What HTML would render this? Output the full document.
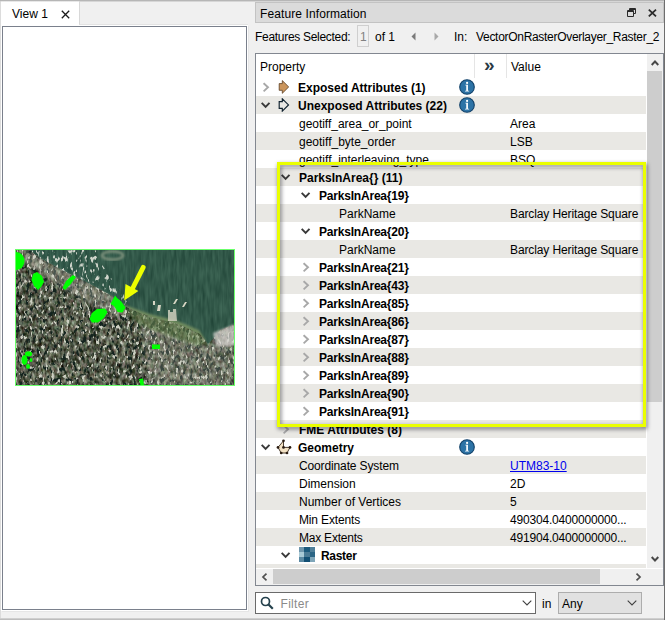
<!DOCTYPE html>
<html><head><meta charset="utf-8"><title>Feature Information</title>
<style>
html,body{margin:0;padding:0}
body{width:665px;height:620px;overflow:hidden;background:#f0f0f0;position:relative;font-family:"Liberation Sans",sans-serif;font-size:12px;color:#000}
div,span,svg{position:absolute;box-sizing:border-box}
.t{white-space:nowrap;line-height:18px;height:18px}
.b{font-weight:bold}
.lk{color:#0000ee;text-decoration:underline}
#tree{left:256px;top:54px;width:407px;height:531px;background:#fff;overflow:hidden}
.r{left:0;width:390px;height:18px;background:#fff}
.r.g{background:#e9e8e4}
</style></head><body>
<!-- top edge -->
<div style="left:0;top:0;width:665px;height:2px;background:linear-gradient(#b4b4b4,#b8b8b8 50%,#f4f4f4)"></div>
<div style="left:0;top:618px;width:665px;height:2px;background:linear-gradient(#d8d8d8,#b4b4b4)"></div>
<div style="left:0;top:2px;width:1px;height:616px;background:#dcdcdc"></div>
<div style="left:664px;top:0;width:1px;height:620px;background:#6e6e6e"></div>

<!-- View tab -->
<div style="left:1px;top:1px;width:78px;height:25px;background:linear-gradient(#d0d0d0,#fff 1px)"></div>
<div style="left:79px;top:2px;width:169px;height:23px;border-left:1px solid #d8d8d8;border-bottom:1px solid #e3e3e3"></div>
<span class="t" style="left:12px;top:5px">View 1</span>
<svg style="left:61px;top:10px" width="9" height="9" viewBox="0 0 9 9"><path d="M0.8 0.8 L8.2 8.2 M8.2 0.8 L0.8 8.2" stroke="#1a1a1a" stroke-width="1.3" fill="none"/></svg>
<!-- View frame -->
<div style="left:2px;top:26px;width:245px;height:584px;background:#fff;border:1px solid #7a808c;box-shadow:0 0 0 1px #fff"></div>
<div style="left:247px;top:26px;width:2px;height:586px;border-right:1px solid #e6e6e6"></div>
<div style="left:2px;top:610px;width:247px;height:2px;border-bottom:1px solid #e6e6e6"></div>

<!--MAPSTART--><svg style="left:15px;top:249px" width="220" height="137" viewBox="15 249 220 137">
<defs>
<filter id="nz" x="0" y="0" width="100%" height="100%" color-interpolation-filters="sRGB">
<feTurbulence type="fractalNoise" baseFrequency="0.31 0.19" numOctaves="2" seed="7"/>
<feColorMatrix type="matrix" values="1 0 0 0 0  0 1 0 0 0  0 0 1 0 0  0 0 0 0 1" result="t1"/>
<feTurbulence type="fractalNoise" baseFrequency="0.07 0.06" numOctaves="2" seed="3"/>
<feColorMatrix type="matrix" values="1 0 0 0 0  1 0 0 0 0  1 0 0 0 0  0 0 0 0 1" result="t2"/>
<feComposite in="t1" in2="t2" operator="arithmetic" k1="0" k2="1" k3="0.3" k4="-0.15" result="t"/>
<feColorMatrix in="t" type="matrix" values="0.8 0.15 0 0 -0.13  0.8 0 0.15 0 -0.11  0.8 0 0 0 -0.1  0 0 0 0 1" result="c0"/>
<feGaussianBlur in="c0" stdDeviation="0.45" result="c"/>
<feComposite in="c" in2="SourceGraphic" operator="in"/>
</filter>
<filter id="nw" x="0" y="0" width="100%" height="100%" color-interpolation-filters="sRGB">
<feTurbulence type="fractalNoise" baseFrequency="0.35 0.06" numOctaves="2" seed="11" result="t"/>
<feColorMatrix in="t" type="matrix" values="0.16 0 0 0 0.115  0.18 0 0 0 0.255  0.16 0 0 0 0.205  0 0 0 0 1" result="c"/>
<feComposite in="c" in2="SourceGraphic" operator="in"/>
</filter>
<filter id="bt" x="0" y="0" width="100%" height="100%" color-interpolation-filters="sRGB">
<feTurbulence type="fractalNoise" baseFrequency="0.34 0.16" numOctaves="2" seed="23" result="t"/>
<feColorMatrix in="t" type="matrix" values="0 0 0 0 0.82  0 0 0 0 0.84  0 0 0 0 0.8  7 0 0 0 -3.95" result="c0"/>
<feGaussianBlur in="c0" stdDeviation="0.4" result="c"/>
<feComposite in="c" in2="SourceGraphic" operator="in"/>
</filter>
<filter id="ws" x="0" y="0" width="100%" height="100%" color-interpolation-filters="sRGB">
<feTurbulence type="fractalNoise" baseFrequency="0.33 0.2" numOctaves="2" seed="41" result="t"/>
<feColorMatrix in="t" type="matrix" values="0 0 0 0 0.8  0 0 0 0 0.81  0 0 0 0 0.76  8 0 0 0 -4.85" result="c0"/>
<feGaussianBlur in="c0" stdDeviation="0.45" result="c"/>
<feComposite in="c" in2="SourceGraphic" operator="in"/>
</filter>
<filter id="ds" x="0" y="0" width="100%" height="100%" color-interpolation-filters="sRGB">
<feTurbulence type="fractalNoise" baseFrequency="0.3 0.18" numOctaves="2" seed="57" result="t"/>
<feColorMatrix in="t" type="matrix" values="0 0 0 0 0.08  0 0 0 0 0.14  0 0 0 0 0.12  0 -8 0 0 3.5" result="c0"/>
<feGaussianBlur in="c0" stdDeviation="0.45" result="c"/>
<feComposite in="c" in2="SourceGraphic" operator="in"/>
</filter>
<filter id="bl2"><feGaussianBlur stdDeviation="0.6"/></filter><filter id="bl"><feGaussianBlur stdDeviation="1.2"/></filter>
</defs>
<rect x="15" y="249" width="220" height="137" fill="#2f5449"/>
<rect x="15" y="249" width="220" height="137" filter="url(#nw)"/>
<!-- island -->
<ellipse cx="112.5" cy="255.5" rx="10.5" ry="4" fill="none" stroke="#7d917c" stroke-width="2.5" filter="url(#bl)"/>
<!-- shoreline park strip -->
<path d="M122 304 L150 314 L178 321 L199 330 L206 341 L190 340 L170 333 L140 323 Z" fill="#6f8a60" filter="url(#bl)"/>
<!-- urban -->
<path d="M15 249 L28 249 L40 258 L62 270 L90 284 L112 296 L124 306 L140 313 L155 318 L178 324 L200 334 L208 344 L214 338 L220 330 L235 324 L235 386 L15 386 Z" fill="#000" filter="url(#nz)"/>
<path d="M15 249 L28 249 L40 258 L62 270 L90 284 L112 296 L124 306 L140 313 L155 318 L178 324 L200 334 L208 344 L214 338 L220 330 L235 324 L235 386 L15 386 Z" fill="#000" filter="url(#ds)"/>
<path d="M15 249 L28 249 L40 258 L62 270 L90 284 L112 296 L124 306 L140 313 L155 318 L178 324 L200 334 L208 344 L214 338 L220 330 L235 324 L235 386 L15 386 Z" fill="#000" filter="url(#ws)"/>
<path d="M124 307 L150 316 L178 323 L199 333 L207 344 L196 346 L170 337 L140 325 Z" fill="#6c8a55" opacity="0.55" filter="url(#bl)"/>
<path d="M22 249 L40 258 L62 270 L90 284 L112 296 L124 306 L118 318 L95 306 L70 292 L45 276 L26 262 Z" fill="#d6d6ca" opacity="0.28" filter="url(#bl)"/>
<path d="M140 325 L200 345 L235 340 L235 386 L150 386 Z" fill="#d0d0c6" opacity="0.2" filter="url(#bl)"/>
<!-- marina boats -->
<path d="M28 249 L95 249 L100 262 L116 284 L128 299 L124 306 L112 296 L90 284 L62 270 L40 258 Z" fill="#000" filter="url(#bt)"/>
<g fill="#d8d6c4" filter="url(#bl2)"><path d="M176 299 l2 0 l-3 5 l-2 0z M185 302 l2 0 l-3 5 l-2 0z M158 305 l3 0 l-1 6 l-3 0z M153 301 l2 0 l0 4 l-2 0z"/><path d="M168 310 L170 310 L170 312 L173 312 L173 309 L176 309 L177 321 L168 321 Z" opacity="0.8"/></g>
<!-- white buildings right -->
<path d="M213 333 L235 324 L235 345 L216 347 Z" fill="#d9d6d2" opacity="0.75" filter="url(#bl)"/>
<!-- green parks -->
<g fill="#00ff00">
<ellipse cx="16.5" cy="261" rx="8" ry="9"/>
<path d="M37 272 L42 276 L44 282 L41 287 L38 290 L34 286 L31.5 280 L33 274 Z"/>
<path d="M73 275 L76 277 L70 285 L65 290 L62.5 288 L66 281 Z"/>
<path d="M115.2 295.5 L110.4 304 L114 306 L117.7 312 L122.5 312.5 L125.5 307.6 L121.3 301.6 L117 298 Z"/>
<path d="M97 309 L105 308.5 L107.5 312 L104 318 L98 322.5 L92 322.5 L89.5 319 L92 313 Z"/>
<ellipse cx="24.5" cy="360" rx="3" ry="5"/><ellipse cx="28.5" cy="353.8" rx="3.6" ry="2.6"/><ellipse cx="28" cy="366.5" rx="2" ry="2.4"/><ellipse cx="31" cy="360" rx="1.4" ry="2"/>
<rect x="152" y="344.5" width="8" height="4.5"/>
<path d="M139 379 L143 378.5 L144 385 L140.5 385 Z"/>
</g>
<!-- arrow -->
<g fill="#ecff00" stroke="none">
<path d="M143.2 267.3 L132.8 288" stroke="#ecff00" stroke-width="4.8" stroke-linecap="round" fill="none"/>
<path d="M125.5 284 L138.4 291 L124.2 300.6 Z"/>
</g>
<rect x="15.5" y="249.5" width="219" height="136" fill="none" stroke="#6bff6b" stroke-width="1"/>
</svg>
<!--MAPEND-->

<!-- Feature info title -->
<div style="left:255px;top:2px;width:409px;height:21px;background:#dbdbdb;border:1px solid #c3c3c3"></div>
<span class="t" style="left:260px;top:5px;letter-spacing:0.1px">Feature Information</span>
<svg style="left:627px;top:8px" width="9" height="9" viewBox="0 0 9 9"><path d="M2.5 2.5 V0.5 H8.5 V5.5 H6.5 M0.5 2.5 H6.5 V8.5 H0.5 Z M0.5 3.5 H6.5 M2.5 1.5 H8.5" stroke="#2a2a2a" stroke-width="1" fill="none"/></svg>
<svg style="left:648px;top:9px" width="9" height="8" viewBox="0 0 9 8"><path d="M0.8 0.7 L8 7.3 M8 0.7 L0.8 7.3" stroke="#2a2a2a" stroke-width="1.8" fill="none"/></svg>

<!-- toolbar row -->
<span class="t" style="left:255px;top:28px;letter-spacing:-0.3px">Features Selected:</span>
<div style="left:357px;top:25px;width:12px;height:22px;border:1px solid #cfcfcf;background:#f0f0f0"></div>
<span class="t" style="left:360px;top:28px;color:#808080">1</span>
<span class="t" style="left:375px;top:28px">of 1</span>
<svg style="left:410.5px;top:32px" width="5" height="9" viewBox="0 0 5 9"><path d="M4.5 0.5 V8.5 L0.5 4.5 Z" fill="#7a7a7a"/></svg>
<svg style="left:434px;top:32px" width="5" height="9" viewBox="0 0 5 9"><path d="M0.5 0.5 V8.5 L4.5 4.5 Z" fill="#a8a8a8"/></svg>
<span class="t" style="left:454px;top:28px">In:</span>
<span class="t" style="left:476px;top:28px;letter-spacing:-0.3px">VectorOnRasterOverlayer_Raster_2</span>

<!-- tree frame -->
<div style="left:255px;top:53px;width:409px;height:533px;border:1px solid #828790;background:#fff"></div>
<div id="tree">
<div class="r" style="top:24px"></div>
<svg class="ch" style="left:7px;top:28px" width="7" height="11" viewBox="0 0 7 11"><path d="M0.6 1.2 L5 5.3 L0.6 9.4" fill="none" stroke="#a8a8a8" stroke-width="1.9"/></svg>
<svg class="ch" style="left:22px;top:26px" width="12" height="14" viewBox="0 0 12 14"><path d="M1.2 3.6 H4.3 V0.6 L10.7 6.95 L4.3 13.3 V10.3 H1.2 Z" fill="#cb955c" stroke="#5a3c20" stroke-width="0.8" stroke-linejoin="miter"/></svg>
<svg class="ch" style="left:203px;top:25px" width="16" height="16" viewBox="0 0 16 16"><circle cx="8" cy="8" r="7.3" fill="#2d73a6" stroke="#13426a" stroke-width="1.1"/><circle cx="8.1" cy="3.9" r="1.1" fill="#fff"/><path d="M6.4 5.7 H9 V11.7 H10.1 V12.6 H6 V11.7 H7.2 V6.6 H6.4 Z" fill="#f4f8fb"/></svg>
<span class="t b" style="left:42px;top:25px">Exposed Attributes (1)</span>
<div class="r g" style="top:42px"></div>
<svg class="ch" style="left:5px;top:47.5px" width="10" height="7" viewBox="0 0 10 7"><path d="M0.7 0.9 L4.6 4.9 L8.5 0.9" fill="none" stroke="#3a3a3a" stroke-width="1.95"/></svg>
<svg class="ch" style="left:22px;top:44px" width="12" height="14" viewBox="0 0 12 14"><path d="M1.2 3.6 H4.3 V0.8 L10.5 6.95 L4.3 13.1 V10.3 H1.2 Z" fill="none" stroke="#10222f" stroke-width="1.15" stroke-linejoin="miter"/></svg>
<svg class="ch" style="left:203px;top:43px" width="16" height="16" viewBox="0 0 16 16"><circle cx="8" cy="8" r="7.3" fill="#2d73a6" stroke="#13426a" stroke-width="1.1"/><circle cx="8.1" cy="3.9" r="1.1" fill="#fff"/><path d="M6.4 5.7 H9 V11.7 H10.1 V12.6 H6 V11.7 H7.2 V6.6 H6.4 Z" fill="#f4f8fb"/></svg>
<span class="t b" style="left:42px;top:43px">Unexposed Attributes (22)</span>
<div class="r" style="top:60px"></div>
<span class="t" style="left:43px;top:61px;letter-spacing:-0.03px">geotiff_area_or_point</span>
<span class="t" style="left:254px;top:61px;letter-spacing:0">Area</span>
<div class="r g" style="top:78px"></div>
<span class="t" style="left:43px;top:79px">geotiff_byte_order</span>
<span class="t" style="left:254px;top:79px;letter-spacing:0">LSB</span>
<div class="r" style="top:96px"></div>
<span class="t" style="left:43px;top:97px">geotiff_interleaving_type</span>
<span class="t" style="left:254px;top:97px;letter-spacing:0">BSQ</span>
<div class="r g" style="top:114px"></div>
<svg class="ch" style="left:25px;top:119.5px" width="10" height="7" viewBox="0 0 10 7"><path d="M0.7 0.9 L4.6 4.9 L8.5 0.9" fill="none" stroke="#3a3a3a" stroke-width="1.95"/></svg>
<span class="t b" style="left:43px;top:115px">ParksInArea{} (11)</span>
<div class="r" style="top:132px"></div>
<svg class="ch" style="left:45px;top:137.5px" width="10" height="7" viewBox="0 0 10 7"><path d="M0.7 0.9 L4.6 4.9 L8.5 0.9" fill="none" stroke="#3a3a3a" stroke-width="1.95"/></svg>
<span class="t b" style="left:63px;top:133px;letter-spacing:-0.2px">ParksInArea{19}</span>
<div class="r g" style="top:150px"></div>
<span class="t" style="left:83px;top:151px">ParkName</span>
<span class="t" style="left:254px;top:151px;letter-spacing:-0.11px">Barclay Heritage Square</span>
<div class="r" style="top:168px"></div>
<svg class="ch" style="left:45px;top:173.5px" width="10" height="7" viewBox="0 0 10 7"><path d="M0.7 0.9 L4.6 4.9 L8.5 0.9" fill="none" stroke="#3a3a3a" stroke-width="1.95"/></svg>
<span class="t b" style="left:63px;top:169px;letter-spacing:-0.2px">ParksInArea{20}</span>
<div class="r g" style="top:186px"></div>
<span class="t" style="left:83px;top:187px">ParkName</span>
<span class="t" style="left:254px;top:187px;letter-spacing:-0.11px">Barclay Heritage Square</span>
<div class="r" style="top:204px"></div>
<svg class="ch" style="left:47px;top:208px" width="7" height="11" viewBox="0 0 7 11"><path d="M0.6 1.2 L5 5.3 L0.6 9.4" fill="none" stroke="#a8a8a8" stroke-width="1.9"/></svg>
<span class="t b" style="left:63px;top:205px;letter-spacing:-0.2px">ParksInArea{21}</span>
<div class="r g" style="top:222px"></div>
<svg class="ch" style="left:47px;top:226px" width="7" height="11" viewBox="0 0 7 11"><path d="M0.6 1.2 L5 5.3 L0.6 9.4" fill="none" stroke="#a8a8a8" stroke-width="1.9"/></svg>
<span class="t b" style="left:63px;top:223px;letter-spacing:-0.2px">ParksInArea{43}</span>
<div class="r" style="top:240px"></div>
<svg class="ch" style="left:47px;top:244px" width="7" height="11" viewBox="0 0 7 11"><path d="M0.6 1.2 L5 5.3 L0.6 9.4" fill="none" stroke="#a8a8a8" stroke-width="1.9"/></svg>
<span class="t b" style="left:63px;top:241px;letter-spacing:-0.2px">ParksInArea{85}</span>
<div class="r g" style="top:258px"></div>
<svg class="ch" style="left:47px;top:262px" width="7" height="11" viewBox="0 0 7 11"><path d="M0.6 1.2 L5 5.3 L0.6 9.4" fill="none" stroke="#a8a8a8" stroke-width="1.9"/></svg>
<span class="t b" style="left:63px;top:259px;letter-spacing:-0.2px">ParksInArea{86}</span>
<div class="r" style="top:276px"></div>
<svg class="ch" style="left:47px;top:280px" width="7" height="11" viewBox="0 0 7 11"><path d="M0.6 1.2 L5 5.3 L0.6 9.4" fill="none" stroke="#a8a8a8" stroke-width="1.9"/></svg>
<span class="t b" style="left:63px;top:277px;letter-spacing:-0.2px">ParksInArea{87}</span>
<div class="r g" style="top:294px"></div>
<svg class="ch" style="left:47px;top:298px" width="7" height="11" viewBox="0 0 7 11"><path d="M0.6 1.2 L5 5.3 L0.6 9.4" fill="none" stroke="#a8a8a8" stroke-width="1.9"/></svg>
<span class="t b" style="left:63px;top:295px;letter-spacing:-0.2px">ParksInArea{88}</span>
<div class="r" style="top:312px"></div>
<svg class="ch" style="left:47px;top:316px" width="7" height="11" viewBox="0 0 7 11"><path d="M0.6 1.2 L5 5.3 L0.6 9.4" fill="none" stroke="#a8a8a8" stroke-width="1.9"/></svg>
<span class="t b" style="left:63px;top:313px;letter-spacing:-0.2px">ParksInArea{89}</span>
<div class="r g" style="top:330px"></div>
<svg class="ch" style="left:47px;top:334px" width="7" height="11" viewBox="0 0 7 11"><path d="M0.6 1.2 L5 5.3 L0.6 9.4" fill="none" stroke="#a8a8a8" stroke-width="1.9"/></svg>
<span class="t b" style="left:63px;top:331px;letter-spacing:-0.2px">ParksInArea{90}</span>
<div class="r" style="top:348px"></div>
<svg class="ch" style="left:47px;top:352px" width="7" height="11" viewBox="0 0 7 11"><path d="M0.6 1.2 L5 5.3 L0.6 9.4" fill="none" stroke="#a8a8a8" stroke-width="1.9"/></svg>
<span class="t b" style="left:63px;top:349px;letter-spacing:-0.2px">ParksInArea{91}</span>
<div class="r g" style="top:366px"></div>
<svg class="ch" style="left:27px;top:370px" width="7" height="11" viewBox="0 0 7 11"><path d="M0.6 1.2 L5 5.3 L0.6 9.4" fill="none" stroke="#a8a8a8" stroke-width="1.9"/></svg>
<span class="t b" style="left:43px;top:367px">FME Attributes (8)</span>
<div class="r" style="top:384px"></div>
<svg class="ch" style="left:5px;top:389.5px" width="10" height="7" viewBox="0 0 10 7"><path d="M0.7 0.9 L4.6 4.9 L8.5 0.9" fill="none" stroke="#3a3a3a" stroke-width="1.95"/></svg>
<svg class="ch" style="left:20px;top:385px" width="16" height="16" viewBox="0 0 16 16"><path d="M7.5 1.8 L7.5 8.4 L14 8.4 L11 14 L5.2 14 L2 8.4 Z" fill="#f3e2c4" stroke="#3a2a1c" stroke-width="0.9" stroke-linejoin="round"/><g fill="#2a1c12"><circle cx="7.5" cy="1.8" r="1.35"/><circle cx="14" cy="8.4" r="1.35"/><circle cx="11" cy="14" r="1.35"/><circle cx="5.2" cy="14" r="1.35"/><circle cx="2" cy="8.4" r="1.35"/><circle cx="7.5" cy="8.4" r="1.35"/></g></svg>
<svg class="ch" style="left:203px;top:385px" width="16" height="16" viewBox="0 0 16 16"><circle cx="8" cy="8" r="7.3" fill="#2d73a6" stroke="#13426a" stroke-width="1.1"/><circle cx="8.1" cy="3.9" r="1.1" fill="#fff"/><path d="M6.4 5.7 H9 V11.7 H10.1 V12.6 H6 V11.7 H7.2 V6.6 H6.4 Z" fill="#f4f8fb"/></svg>
<span class="t b" style="left:42px;top:385px">Geometry</span>
<div class="r g" style="top:402px"></div>
<span class="t" style="left:43px;top:403px;letter-spacing:-0.13px">Coordinate System</span>
<span class="t lk" style="left:254px;top:403px">UTM83-10</span>
<div class="r" style="top:420px"></div>
<span class="t" style="left:43px;top:421px">Dimension</span>
<span class="t" style="left:254px;top:421px;letter-spacing:0">2D</span>
<div class="r g" style="top:438px"></div>
<span class="t" style="left:43px;top:439px">Number of Vertices</span>
<span class="t" style="left:254px;top:439px;letter-spacing:0">5</span>
<div class="r" style="top:456px"></div>
<span class="t" style="left:43px;top:457px;letter-spacing:-0.15px">Min Extents</span>
<span class="t" style="left:254px;top:457px;letter-spacing:-0.18px">490304.0400000000...</span>
<div class="r g" style="top:474px"></div>
<span class="t" style="left:43px;top:475px;letter-spacing:-0.22px">Max Extents</span>
<span class="t" style="left:254px;top:475px;letter-spacing:-0.18px">491904.0400000000...</span>
<div class="r" style="top:492px"></div>
<svg class="ch" style="left:25px;top:497.5px" width="10" height="7" viewBox="0 0 10 7"><path d="M0.7 0.9 L4.6 4.9 L8.5 0.9" fill="none" stroke="#3a3a3a" stroke-width="1.95"/></svg>
<svg class="ch" style="left:43px;top:493px" width="16" height="15" viewBox="0 0 16 15" shape-rendering="crispEdges"><rect width="16" height="15" fill="#4f7f99"/><rect x="0" y="0" width="5" height="5" fill="#7097ad"/><rect x="5" y="0" width="6" height="5" fill="#1c5a7c"/><rect x="11" y="0" width="5" height="5" fill="#4f7f99"/><rect x="0" y="5" width="5" height="5" fill="#a9cad6"/><rect x="5" y="5" width="6" height="5" fill="#4a7a94"/><rect x="11" y="5" width="5" height="5" fill="#2b6585"/><rect x="0" y="10" width="5" height="5" fill="#5b89a2"/><rect x="5" y="10" width="6" height="5" fill="#124f73"/><rect x="11" y="10" width="5" height="5" fill="#7fa6b9"/></svg>
<span class="t b" style="left:65px;top:493px;letter-spacing:-0.3px">Raster</span>
<div class="r g" style="top:510px"></div>
<!-- header -->
<div style="left:0;top:0;width:391px;height:24px;background:#fff"></div>
<div style="left:218px;top:0;width:1px;height:24px;background:#e5e5e5"></div>
<div style="left:250px;top:0;width:1px;height:24px;background:#e5e5e5"></div>
<span class="t" style="left:4px;top:4px">Property</span>
<span class="t" style="left:228px;top:2px;font-weight:bold;color:#2a3a44;font-size:19px">»</span>
<span class="t" style="left:255px;top:4px">Value</span>
<!-- v scrollbar -->
<div style="left:391px;top:0;width:16px;height:515px;background:#f0f0f0"></div>
<div style="left:391px;top:17px;width:15px;height:331px;background:#cdcdcd"></div>
<svg style="left:395px;top:6px" width="8" height="6" viewBox="0 0 8 6"><path d="M0.7 5 L4 1.5 L7.3 5" fill="none" stroke="#484848" stroke-width="1.9"/></svg>
<svg style="left:395px;top:502px" width="8" height="6" viewBox="0 0 8 6"><path d="M0.7 1 L4 4.5 L7.3 1" fill="none" stroke="#484848" stroke-width="1.9"/></svg>
<!-- h scrollbar -->
<div style="left:0;top:514px;width:407px;height:1px;background:#fff"></div>
<div style="left:0;top:515px;width:407px;height:16px;background:#f0f0f0"></div>
<div style="left:17px;top:515px;width:327px;height:15px;background:#cdcdcd"></div>
<svg style="left:5px;top:519px" width="7" height="8" viewBox="0 0 7 8"><path d="M5.5 0.7 L2 4 L5.5 7.3" fill="none" stroke="#505050" stroke-width="1.7"/></svg>
<svg style="left:379px;top:519px" width="7" height="8" viewBox="0 0 7 8"><path d="M1.5 0.7 L5 4 L1.5 7.3" fill="none" stroke="#505050" stroke-width="1.7"/></svg>
</div>

<!-- yellow highlight -->
<div style="left:277px;top:162px;width:369px;height:265px;border:3px solid #eaff00;filter:drop-shadow(1.2px 2.6px 2.2px rgba(10,10,20,0.6))"></div>

<!-- filter bar -->
<div style="left:255px;top:592px;width:281px;height:22px;background:#fff;border:1px solid #6a6a6a"></div>
<svg style="left:260px;top:596px" width="14" height="14" viewBox="0 0 14 14"><circle cx="5.5" cy="5.5" r="4" fill="none" stroke="#24404c" stroke-width="1.7"/><path d="M8.5 8.5 L12.8 12.8" stroke="#24404c" stroke-width="2.2"/></svg>
<span class="t" style="left:280.5px;top:595px;color:#8a8a8a;letter-spacing:0.3px">Filter</span>
<svg style="left:522px;top:600px" width="10" height="6" viewBox="0 0 10 6"><path d="M0.7 0.7 L5 5 L9.3 0.7" fill="none" stroke="#404040" stroke-width="1.1"/></svg>
<span class="t" style="left:542px;top:595px">in</span>
<div style="left:558px;top:592px;width:84px;height:22px;background:#e1e1e1;border:1px solid #adadad"></div>
<span class="t" style="left:562px;top:595px">Any</span>
<svg style="left:627px;top:600px" width="10" height="6" viewBox="0 0 10 6"><path d="M0.7 0.7 L5 5 L9.3 0.7" fill="none" stroke="#404040" stroke-width="1.1"/></svg>
</body></html>
